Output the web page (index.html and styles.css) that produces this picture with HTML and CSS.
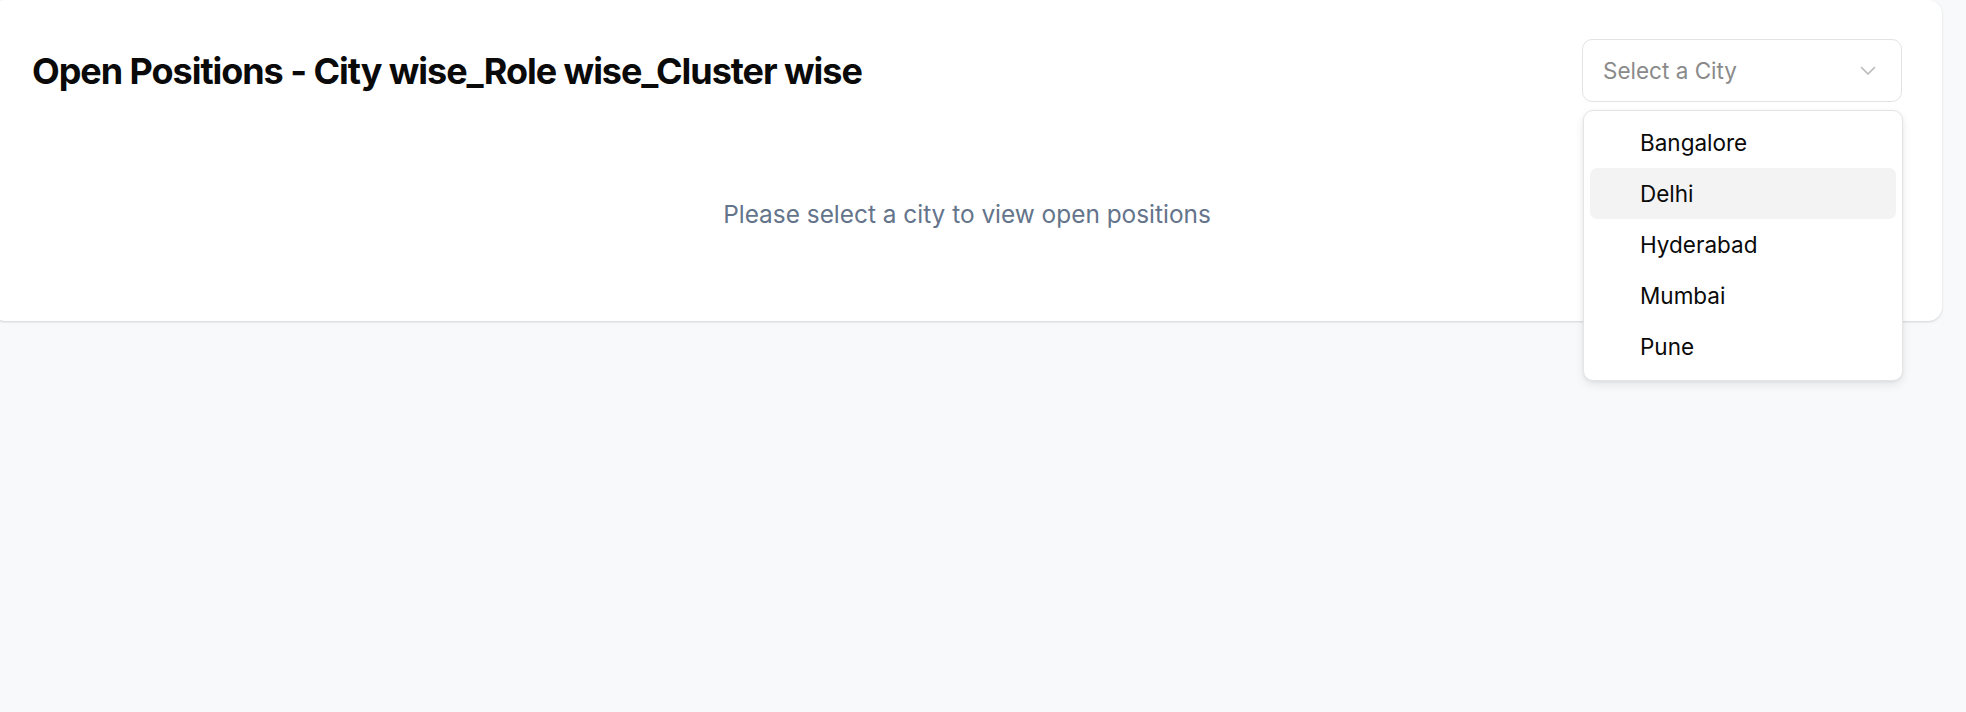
FILE: index.html
```html
<!DOCTYPE html>
<html lang="en">
<head>
<meta charset="utf-8">
<title>Open Positions</title>
<link rel="stylesheet" href="styles.css">
</head>
<body>
<main class="card">
  <header class="card-header">
    <h1 class="title">Open Positions - City wise_Role wise_Cluster wise</h1>
    <div class="select">
      <button class="select-trigger" type="button">
        <span class="placeholder">Select a City</span>
        <svg class="chevron" width="16" height="10" viewBox="0 0 16 10" fill="none"><path d="M1.5 1.5 8 8l6.5-6.5" stroke="currentColor" stroke-width="1.6" stroke-linecap="round" stroke-linejoin="round"/></svg>
      </button>
      <ul class="menu">
        <li class="item">Bangalore</li>
        <li class="item active">Delhi</li>
        <li class="item">Hyderabad</li>
        <li class="item">Mumbai</li>
        <li class="item">Pune</li>
      </ul>
    </div>
  </header>
  <p class="empty">Please select a city to view open positions</p>
</main>
</body>
</html>
```
FILE: styles.css
```css
* { box-sizing: border-box; }
html, body { margin: 0; padding: 0; }
body {
  background: #f8f9fb;
  font-family: Inter, "Noto Sans", "Liberation Sans", sans-serif;
  color: #0a0a0a;
  width: 1966px;
  height: 712px;
  overflow: hidden;
}
.card {
  margin-left: -9px;
  width: 1951px;
  background: #fff;
  border-radius: 14px;
  box-shadow: 0 1px 3px rgba(0,0,0,0.10), 0 1px 2px rgba(0,0,0,0.06);
  padding: 39px 40px 0 41px;
}
.card-header {
  display: flex;
  align-items: center;
  justify-content: space-between;
}
.title {
  margin: 0;
  font-size: 36px;
  font-weight: 700;
  letter-spacing: -1.05px;
  line-height: 44px;
}
.select {
  position: relative;
  width: 320px;
}
.select-trigger {
  display: flex;
  align-items: center;
  justify-content: space-between;
  width: 100%;
  height: 63px;
  padding: 0 25px 0 20px;
  background: #fff;
  border: 1px solid #e3e3e3;
  border-radius: 10px;
  font: inherit;
  font-size: 22.5px;
  color: #8a8a8a;
}
.chevron { color: #b8b8b8; }
.menu {
  position: absolute;
  top: calc(100% + 8px);
  left: 1px;
  width: 320px;
  margin: 0;
  padding: 6px 6px 8px;
  list-style: none;
  background: #fff;
  border: 1px solid #e5e5e5;
  border-radius: 10px;
  box-shadow: 0 4px 10px rgba(0,0,0,0.08), 0 1px 3px rgba(0,0,0,0.06);
}
.item {
  height: 51px;
  display: flex;
  align-items: center;
  padding-left: 50px;
  font-size: 22.5px;
  color: #0a0a0a;
  border-radius: 7px;
}
.item.active { background: #f3f3f3; }
.empty {
  margin: 0;
  padding: 96px 0 91px;
  text-align: center;
  font-size: 24.4px;
  line-height: 32px;
  color: #64748b;
}
```
